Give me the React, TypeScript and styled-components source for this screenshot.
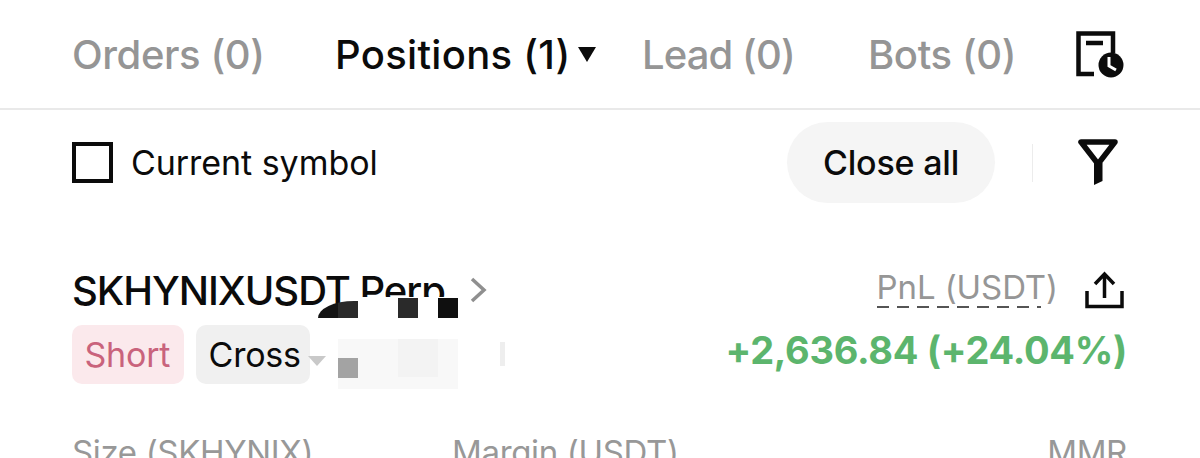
import { createGlobalStyle } from "styled-components";
import styled from "styled-components";

const GlobalStyle = createGlobalStyle`
  html, body {
    margin: 0;
    padding: 0;
    background: #fff;
    overflow: hidden;
  }
  body {
    font-family: Inter, "Liberation Sans", sans-serif;
    color: #0b0b0b;
  }
`;

const Page = styled.div`
  position: relative;
  width: 1200px;
  height: 458px;
  overflow: hidden;
`;

const TabBar = styled.div`
  display: flex;
  align-items: center;
  height: 110px;
  padding: 0 76px 0 72px;
  border-bottom: 2px solid #e9e9e9;
  box-sizing: border-box;
`;

const Tab = styled.div<{ $active?: boolean; $width: number; $tracking: number }>`
  width: ${(p) => p.$width}px;
  flex: none;
  display: flex;
  align-items: center;
  font-size: 40px;
  font-weight: 500;
  letter-spacing: ${(p) => p.$tracking}px;
  white-space: nowrap;
  color: ${(p) => (p.$active ? "#0b0b0b" : "#959595")};
`;

const Caret = styled.span`
  width: 0;
  height: 0;
  margin-left: 7px;
  border-left: 9.5px solid transparent;
  border-right: 9.5px solid transparent;
  border-top: 15px solid #0b0b0b;
`;

const IconSlot = styled.div`
  margin-left: auto;
  display: flex;
`;

const Toolbar = styled.div`
  display: flex;
  align-items: center;
  height: 105px;
  padding: 0 82px 0 72px;
  box-sizing: border-box;
`;

const CheckBox = styled.span`
  width: 41px;
  height: 41px;
  box-sizing: border-box;
  border: 4.5px solid #0b0b0b;
  margin-right: 18px;
`;

const CheckLabel = styled.span`
  font-size: 34px;
  letter-spacing: -0.05px;
`;

const CloseAll = styled.button`
  margin-left: auto;
  width: 208px;
  height: 81px;
  border: none;
  border-radius: 41px;
  background: #f5f5f5;
  color: #0b0b0b;
  font-family: inherit;
  font-size: 34px;
  font-weight: 500;
  letter-spacing: -0.2px;
`;

const Divider = styled.span`
  width: 1px;
  height: 38px;
  margin: 0 45px 0 37px;
  background: #ececec;
`;

const PositionHead = styled.div`
  display: flex;
  justify-content: space-between;
  padding: 47px 76px 0 72px;
`;

const SymbolRow = styled.div`
  display: flex;
  align-items: center;
  height: 56px;
  font-size: 40px;
  font-weight: 500;
  letter-spacing: -1.05px;
`;

const Chevron = styled.svg`
  margin-left: 24px;
`;

const PnlRow = styled.div`
  display: flex;
  align-items: center;
  height: 56px;
`;

const PnlLabel = styled.span`
  position: relative;
  font-size: 33px;
  line-height: 36px;
  letter-spacing: -0.1px;
  color: #969696;
  margin: 0 27px 6px 0;

  &::after {
    content: "";
    position: absolute;
    left: 0;
    bottom: -3px;
    width: 164px;
    height: 2px;
    background-image: linear-gradient(to right, #555 0 12px, transparent 12px 20px);
    background-size: 20px 2px;
  }
`;

const PositionSub = styled.div`
  display: flex;
  justify-content: space-between;
  align-items: center;
  padding: 7px 73px 0 72px;
`;

const Tags = styled.div`
  display: flex;
  gap: 12px;
`;

const Tag = styled.span<{ $tone: "short" | "plain"; $width: number }>`
  display: flex;
  align-items: center;
  box-sizing: border-box;
  width: ${(p) => p.$width}px;
  height: 59px;
  padding-left: 12.5px;
  border-radius: 10px;
  font-size: 34px;
  letter-spacing: -0.2px;
  white-space: nowrap;
  background: ${(p) => (p.$tone === "short" ? "#fbe9ec" : "#f0f0f0")};
  color: ${(p) => (p.$tone === "short" ? "#c9637c" : "#0b0b0b")};
`;

const PnlValue = styled.span`
  font-size: 38px;
  font-weight: 700;
  letter-spacing: -0.3px;
  color: #5cb56d;
  padding-bottom: 9px;
`;

const Stats = styled.div`
  display: grid;
  grid-template-columns: 380px 1fr auto;
  padding: 48px 73px 0 72px;
  font-size: 33px;
  letter-spacing: -0.35px;
  color: #989898;
`;

// mosaic the screenshot has over the leverage tag and the end of the symbol
const Mask = styled.div`
  position: absolute;
  left: 358px;
  top: 297px;
  width: 110px;
  height: 24px;
  background: #fff;
`;

const Smear = styled.div<{ $x: number; $y: number; $w: number; $h: number; $shade: string }>`
  position: absolute;
  left: ${(p) => p.$x}px;
  top: ${(p) => p.$y}px;
  width: ${(p) => p.$w}px;
  height: ${(p) => p.$h}px;
  background: ${(p) => p.$shade};
`;

const Arc = styled.div`
  position: absolute;
  left: 318px;
  top: 301px;
  width: 40px;
  height: 17px;
  background: linear-gradient(to right, #141414 50%, #2a2a2a 50%);
  border-top-left-radius: 36px 17px;
`;

const Wedge = styled.div`
  position: absolute;
  left: 308px;
  top: 356px;
  width: 0;
  height: 0;
  border-top: 10px solid #c9c9c9;
  border-left: 9px solid transparent;
  border-right: 9px solid transparent;
`;

export default function App() {
  return (
    <Page>
      <GlobalStyle />
      <TabBar>
        <Tab $width={263} $tracking={-0.4}>
          Orders (0)
        </Tab>
        <Tab $width={307} $tracking={0.3} $active>
          Positions (1)
          <Caret />
        </Tab>
        <Tab $width={226} $tracking={-0.9}>
          Lead (0)
        </Tab>
        <Tab $width={150} $tracking={-0.4}>
          Bots (0)
        </Tab>
        <IconSlot>
          <svg width="48" height="47" viewBox="0 0 48 47" fill="none">
            <path d="M18 43H2.5V2.5h34.5V22" stroke="#0b0b0b" strokeWidth="4.5" />
            <path d="M10 12h17" stroke="#0b0b0b" strokeWidth="4.5" />
            <circle cx="35" cy="34" r="12.5" fill="#0b0b0b" />
            <path d="M33 26v9l7 4" stroke="#fff" strokeWidth="3" />
          </svg>
        </IconSlot>
      </TabBar>

      <Toolbar>
        <CheckBox />
        <CheckLabel>Current symbol</CheckLabel>
        <CloseAll>Close all</CloseAll>
        <Divider />
        <svg width="40" height="47" viewBox="0 0 40 47" fill="none">
          <path d="M3 3h34L20 25z" stroke="#0b0b0b" strokeWidth="5.5" strokeLinejoin="round" />
          <path d="M16 24h8.5v18L16 46z" fill="#0b0b0b" />
        </svg>
      </Toolbar>

      <PositionHead>
        <SymbolRow>
          SKHYNIXUSDT Perp
          <Chevron width="18" height="26" viewBox="0 0 18 26" fill="none">
            <path d="M3 2l12 11L3 24" stroke="#8f8f8f" strokeWidth="3.5" />
          </Chevron>
        </SymbolRow>
        <PnlRow>
          <PnlLabel>PnL (USDT)</PnlLabel>
          <svg width="39" height="38" viewBox="0 0 39 38" fill="none">
            <path d="M2 20v15.5h35V20" stroke="#0b0b0b" strokeWidth="3.5" />
            <path d="M19.5 27V4M10 13l9.5-10L29 13" stroke="#0b0b0b" strokeWidth="3.5" />
          </svg>
        </PnlRow>
      </PositionHead>

      <PositionSub>
        <Tags>
          <Tag $tone="short" $width={112}>
            Short
          </Tag>
          <Tag $tone="plain" $width={114}>
            Cross
          </Tag>
        </Tags>
        <PnlValue>+2,636.84 (+24.04%)</PnlValue>
      </PositionSub>

      <Stats>
        <span>Size (SKHYNIX)</span>
        <span>Margin (USDT)</span>
        <span>MMR</span>
      </Stats>

      <Mask />
      <Arc />
      <Smear $x={398} $y={298} $w={20} $h={20} $shade="#2a2a2a" />
      <Smear $x={438} $y={298} $w={20} $h={20} $shade="#0f0f0f" />
      <Smear $x={338} $y={339} $w={120} $h={50} $shade="#f8f8f8" />
      <Smear $x={398} $y={339} $w={40} $h={38} $shade="#f3f3f3" />
      <Smear $x={338} $y={358} $w={20} $h={20} $shade="#a3a3a3" />
      <Smear $x={500} $y={342} $w={5} $h={24} $shade="#eeeeee" />
      <Wedge />
    </Page>
  );
}
